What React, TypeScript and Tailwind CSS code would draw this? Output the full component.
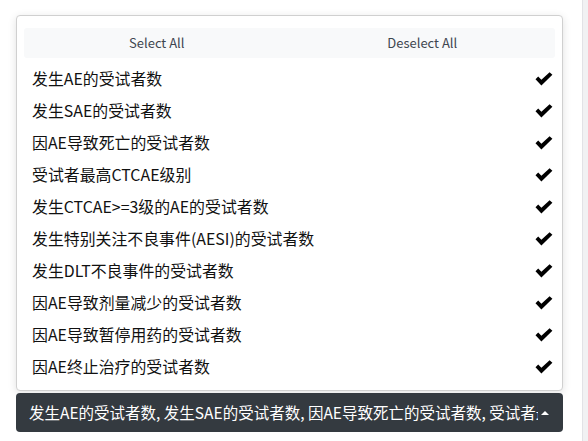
const OPTIONS = [
  '发生AE的受试者数',
  '发生SAE的受试者数',
  '因AE导致死亡的受试者数',
  '受试者最高CTCAE级别',
  '发生CTCAE>=3级的AE的受试者数',
  '发生特别关注不良事件(AESI)的受试者数',
  '发生DLT不良事件的受试者数',
  '因AE导致剂量减少的受试者数',
  '因AE导致暂停用药的受试者数',
  '因AE终止治疗的受试者数',
];

const font = { fontFamily: '"Noto Sans CJK SC", "Noto Sans", sans-serif' };

function Check() {
  return (
    <svg width="18" height="14" viewBox="0 0 18 14" className="shrink-0">
      <path d="M0.5 7.2 L3.2 4.6 L6.4 7.8 L14.6 0.2 L17.4 2.8 L6.4 13.4 Z" fill="#000" />
    </svg>
  );
}

export default function App() {
  return (
    <div className="w-[588px] h-[441px] bg-white flex overflow-hidden" style={font}>
      <div className="pl-[16px] pt-[15px] w-[563px] flex flex-col">
        <div className="w-[547px] bg-white border border-[#d0d0d0] rounded-[4px] shadow-[0_2px_8px_rgba(0,0,0,0.12)] px-[7px] pt-[12px] pb-[7px]">
          <div className="h-[30px] bg-[#f8f9fa] rounded-[3px] grid grid-cols-2 text-[13px] text-[#3f4650]">
            <button className="flex items-center justify-center">Select All</button>
            <button className="flex items-center justify-center">Deselect All</button>
          </div>
          <ul className="mt-[5px]">
            {OPTIONS.map(opt => (
              <li key={opt} className="h-[32px] flex items-center justify-between pl-[8px] pr-[2px] text-[15.9px] text-[#111]">
                <span>{opt}</span>
                <Check />
              </li>
            ))}
          </ul>
        </div>
        <button className="mt-[2px] w-[547px] h-[39px] bg-[#343a40] rounded-[4px] flex items-center pl-[13px] pr-[12px] text-white text-[15.5px]">
          <span className="w-[509px] overflow-hidden whitespace-nowrap text-left">
            发生AE的受试者数, 发生SAE的受试者数, 因AE导致死亡的受试者数, 受试者最高CTCAE级别, 发生CTCAE&gt;=3级的AE的受试者数
          </span>
          <span className="ml-[3px] w-0 h-0 border-l-[4px] border-r-[4px] border-b-[4px] border-l-transparent border-r-transparent border-b-white" />
        </button>
      </div>
      <div className="ml-auto w-[6px] h-full bg-[#f1f1f3] border-l border-[#e2e2e6]" />
    </div>
  );
}
